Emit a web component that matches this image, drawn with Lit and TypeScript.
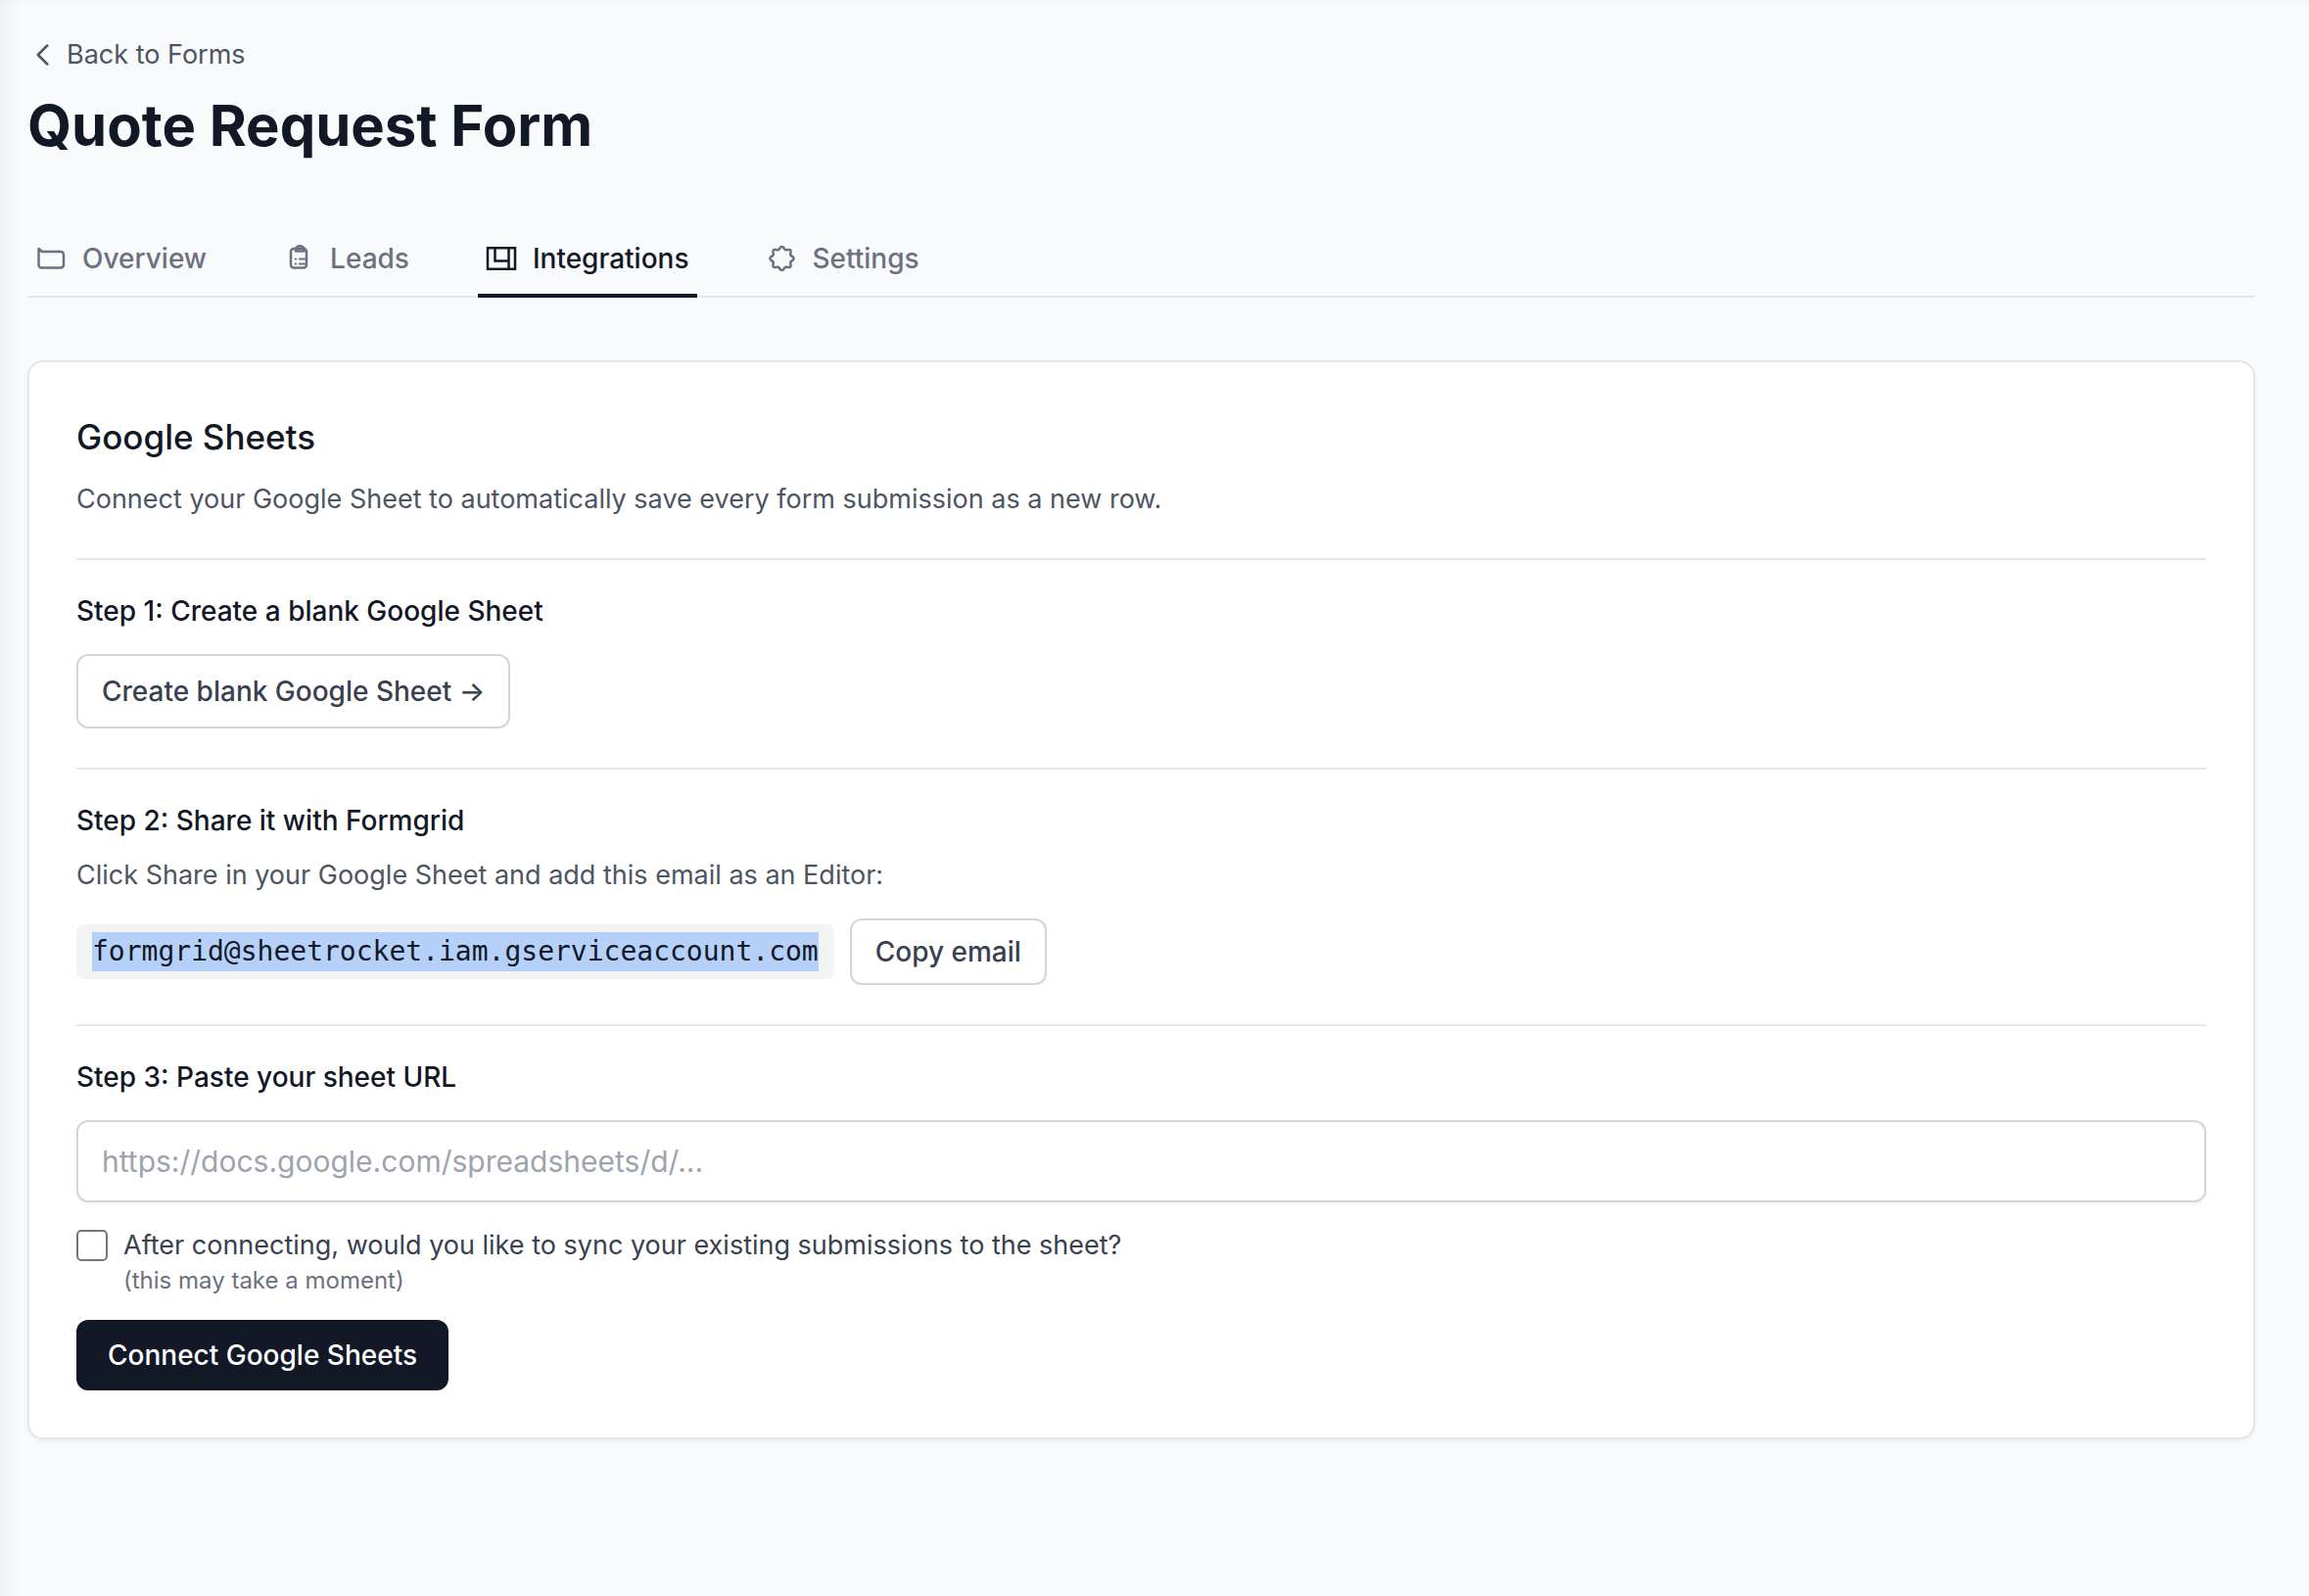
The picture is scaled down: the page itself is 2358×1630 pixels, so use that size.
import { html, css, svg, LitElement } from 'lit';
import { customElement, property, state } from 'lit/decorators.js';
import { classMap } from 'lit/directives/class-map.js';

// wavy outline with eight rounded teeth
function gearPoints() {
    const points: string[] = [];
    for (let i = 0; i < 96; i++) {
        const angle = (i / 96) * Math.PI * 2;
        const radius = 10.8 + 1.3 * Math.cos(angle * 8);
        points.push(`${(16.5 + radius * Math.cos(angle)).toFixed(2)},${(16 + radius * Math.sin(angle)).toFixed(2)}`);
    }
    return points.join(' ');
}

const icons = {
    back: svg`<path d="M20.3 6.5 10.8 16l9.500 9.500" stroke-linecap="round" />`,
    folder: svg`
        <path d="M3.500 6v16.500a3 3 0 0 0 3 3H26a3 3 0 0 0 3-3V12a3 3 0 0 0-3-3H7z" />
        <path d="M4.500 7.500 7 9" />`,
    clipboard: svg`
        <rect x="8" y="6" width="16" height="19.500" rx="3" />
        <path d="M13 8.500V6.500a4.300 3.200 0 0 1 8.600 0v2z" />
        <path d="M12.800 16.500h.4M17 16.500h5M12.800 21.500h.4M17 21.500h5" stroke-width="2.200" stroke-linecap="round" />`,
    blocks: svg`
        <path d="M2 5.200h28v21.600H2z" stroke-linejoin="miter" />
        <path d="M9.500 5v13.500h14M23.500 5v22" stroke-linejoin="miter" />`,
    gear: svg`<polygon points=${gearPoints()} />`,
};

@customElement('tab-icon')
class TabIcon extends LitElement {
    static styles = css`
        :host {
            display: block;
            width: 32px;
            height: 32px;
        }
        svg {
            display: block;
            fill: none;
            stroke: currentColor;
            stroke-width: 2.5;
            stroke-linejoin: round;
        }
    `;

    @property() name = 'folder';

    render() {
        return html`<svg viewBox="0 0 32 32" width="32" height="32" aria-hidden="true">${icons[this.name]}</svg>`;
    }
}

@customElement('app-root')
class AppRoot extends LitElement {
    static styles = css`
        * {
            box-sizing: border-box;
        }
        :host {
            display: block;
            min-height: 100vh;
            padding: 36px 55px 64px 28px;
            background-color: #f9fafc;
            background-image:
                linear-gradient(to right, rgb(0 0 0 / 3%), transparent 22px),
                linear-gradient(to bottom, rgb(0 0 0 / 2%), transparent 6px);
            box-sizing: border-box;
            color: #121826;
            font-family: Inter, "Liberation Sans", sans-serif;
            font-size: 27px;
            line-height: 40px;
        }
        h1, h2, h3, p {
            margin: 0;
        }
        button, input {
            font: inherit;
        }
        .back {
            display: flex;
            align-items: center;
            gap: 8px;
            width: fit-content;
            color: #4d5562;
            text-decoration: none;
        }
        .title {
            margin-top: 16px;
            font-size: 58px;
            font-weight: 700;
            line-height: 72px;
        }
        .tabs {
            display: flex;
            gap: 62px;
            margin-top: 64px;
            box-shadow: inset 0 -2px #e5e6ea;
        }
        .tab {
            display: flex;
            align-items: center;
            gap: 16px;
            padding: 16px 8px;
            border: none;
            border-bottom: 4px solid transparent;
            background: none;
            color: #6c717f;
            font-size: 28px;
            font-weight: 500;
            cursor: pointer;
        }
        .tab.active {
            border-color: #121826;
            color: #121826;
        }
        .card {
            margin-top: 64px;
            padding: 48px;
            border: 2px solid #e5e6ea;
            border-radius: 16px;
            background-color: #fff;
            box-shadow: 0 2px 4px rgb(0 0 0 / 5%);
        }
        .heading {
            font-size: 35px;
            font-weight: 500;
            line-height: 56px;
        }
        .text {
            margin-top: 16px;
            color: #4d5562;
        }
        .step {
            margin-top: 40px;
            padding-top: 32px;
            border-top: 2px solid #e5e6ea;
        }
        .step-title {
            display: block;
            font-size: 28px;
            font-weight: 500;
            line-height: 40px;
        }
        .row {
            display: flex;
            align-items: center;
            gap: 16px;
            margin-top: 24px;
        }
        .btn {
            padding: 12px 24px;
            border: 2px solid #d2d5db;
            border-radius: 12px;
            background-color: #fff;
            color: #394150;
            font-size: 28px;
            font-weight: 500;
            text-decoration: none;
            cursor: pointer;
        }
        .btn.tall {
            padding: 16px 24px;
        }
        .email {
            padding: 8px 16px;
            border-radius: 8px;
            background-color: #f3f4f6;
            font-family: "DejaVu Sans Mono", monospace;
            font-size: 28px;
        }
        .selected {
            display: block;
            background-color: #b5d1f9;
        }
        .url {
            display: block;
            width: 100%;
            margin-top: 24px;
            height: 84px;
            padding: 16px 24px;
            border: 2px solid #d2d5db;
            border-radius: 12px;
            background-color: #fff;
            box-shadow: 0 2px 4px rgb(0 0 0 / 5%);
            font-size: 30px;
        }
        .url::placeholder {
            color: #9ea3ae;
            opacity: 1;
        }
        .sync {
            display: grid;
            grid-template-columns: 32px 1fr;
            column-gap: 16px;
            align-items: center;
            margin-top: 24px;
            color: #394150;
        }
        .check {
            appearance: none;
            width: 32px;
            height: 32px;
            margin: 0;
            border: 2px solid #767676;
            border-radius: 5px;
            background-color: #fff;
        }
        .check:checked {
            background-color: #121826;
        }
        .hint {
            grid-column: 2;
            color: #6c717f;
            font-size: 24px;
            line-height: 32px;
        }
        .submit {
            margin-top: 24px;
            padding: 16px 32px;
            border: none;
            border-radius: 12px;
            background-color: #121826;
            color: #fff;
            font-size: 28px;
            font-weight: 500;
            cursor: pointer;
        }
    `;

    @state() activeTab = 'Integrations';

    tabs = [
        { label: 'Overview', icon: 'folder' },
        { label: 'Leads', icon: 'clipboard' },
        { label: 'Integrations', icon: 'blocks' },
        { label: 'Settings', icon: 'gear' },
    ];

    email = 'formgrid@sheetrocket.iam.gserviceaccount.com';

    copyEmail() {
        navigator.clipboard.writeText(this.email);
    }

    renderTab(tab) {
        const active = tab.label === this.activeTab;
        return html`
            <button
                class=${classMap({ tab: true, active })}
                role="tab"
                aria-selected=${active}
                @click=${() => { this.activeTab = tab.label; }}
            >
                <tab-icon name=${tab.icon}></tab-icon>
                ${tab.label}
            </button>
        `;
    }

    render() {
        return html`
            <header>
                <a class="back" href="#forms"><tab-icon name="back"></tab-icon>Back to Forms</a>
                <h1 class="title">Quote Request Form</h1>
            </header>

            <nav class="tabs" role="tablist">
                ${this.tabs.map((tab) => this.renderTab(tab))}
            </nav>

            <main class="card">
                <h2 class="heading">Google Sheets</h2>
                <p class="text">Connect your Google Sheet to automatically save every form submission as a new row.</p>

                <section class="step">
                    <h3 class="step-title">Step 1: Create a blank Google Sheet</h3>
                    <div class="row">
                        <a class="btn tall" href="#new-sheet">Create blank Google Sheet →</a>
                    </div>
                </section>

                <section class="step">
                    <h3 class="step-title">Step 2: Share it with Formgrid</h3>
                    <p class="text">Click Share in your Google Sheet and add this email as an Editor:</p>
                    <div class="row">
                        <code class="email"><span class="selected">${this.email}</span></code>
                        <button class="btn" @click=${this.copyEmail}>Copy email</button>
                    </div>
                </section>

                <section class="step">
                    <label class="step-title" for="sheet-url">Step 3: Paste your sheet URL</label>
                    <input class="url" id="sheet-url" type="url" placeholder="https://docs.google.com/spreadsheets/d/..." />
                    <div class="sync">
                        <input class="check" id="sync" type="checkbox" aria-describedby="sync-hint" />
                        <label for="sync">After connecting, would you like to sync your existing submissions to the sheet?</label>
                        <span class="hint" id="sync-hint">(this may take a moment)</span>
                    </div>
                    <button class="submit">Connect Google Sheets</button>
                </section>
            </main>
        `;
    }
}
